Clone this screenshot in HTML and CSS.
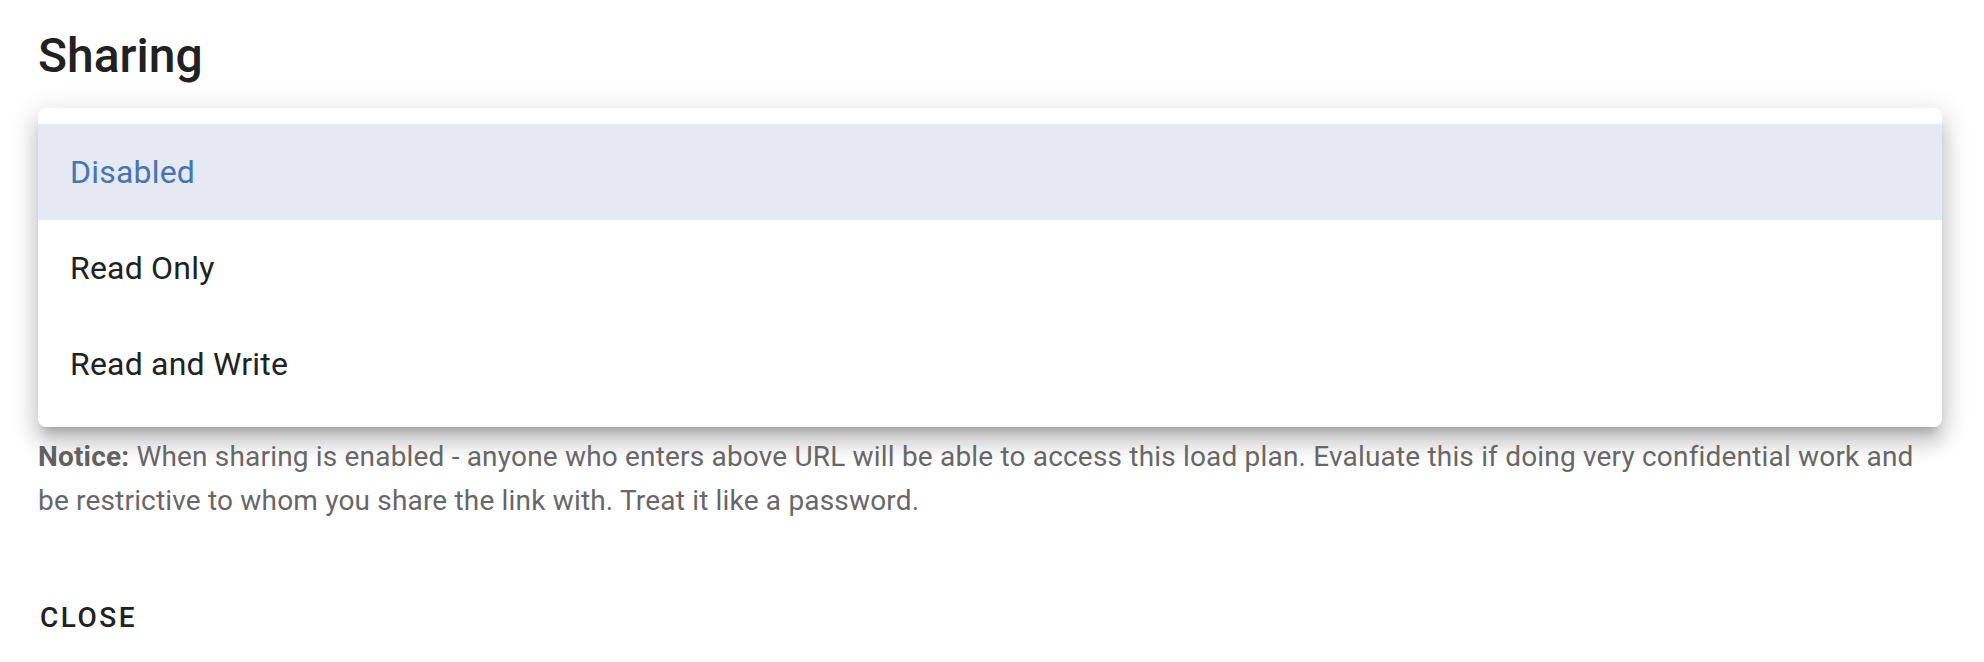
FILE: index.html
```html
<!DOCTYPE html>
<html lang="en">
<head>
<meta charset="utf-8">
<title>Sharing</title>
<link rel="stylesheet" href="styles.css">
</head>
<body>
<div class="dialog">
  <h1 class="title">Sharing</h1>
  <div class="menu" role="listbox">
    <div class="item active" role="option">Disabled</div>
    <div class="item" role="option">Read Only</div>
    <div class="item" role="option">Read and Write</div>
  </div>
  <p class="notice"><strong>Notice:</strong> When sharing is enabled - anyone who enters above URL will be able to access this load plan. Evaluate this if doing very confidential work and be restrictive to whom you share the link with. Treat it like a password.</p>
  <div class="actions">
    <button class="btn" type="button">Close</button>
  </div>
</div>
</body>
</html>
```

FILE: styles.css
```css
html, body {
  margin: 0;
  padding: 0;
  background: #ffffff;
}

body {
  font-family: Roboto, "Noto Sans", Arial, sans-serif;
  width: 1984px;
  height: 662px;
  overflow: hidden;
}

.dialog {
  padding: 24px 42px 0 38px;
  display: flex;
  flex-direction: column;
}

.title {
  margin: 0;
  font-size: 48px;
  line-height: 64px;
  font-weight: 500;
  color: #212121;
  letter-spacing: 0;
}

.menu {
  margin-top: 20px;
  background: #ffffff;
  border-radius: 8px;
  padding: 16px 0 15px;
  box-shadow: 0 10px 10px -6px rgba(0,0,0,.2),
              0 16px 20px 2px rgba(0,0,0,.14),
              0 6px 28px 4px rgba(0,0,0,.12);
}

.item {
  height: 96px;
  display: flex;
  align-items: center;
  padding: 0 32px;
  font-size: 32px;
  color: #212121;
  letter-spacing: 0.2px;
}

.item.active {
  background: #e4e9f3;
  color: #4775b0;
}

.notice {
  margin: 8px 0 0;
  padding-right: 12px;
  font-size: 28px;
  line-height: 44px;
  color: #676767;
  letter-spacing: 0.18px;
}

.notice strong {
  font-weight: 700;
  color: #616161;
}

.actions {
  margin-top: 59px;
  display: flex;
}

.btn {
  height: 72px;
  line-height: 72px;
  padding: 0 2px;
  border: 0;
  background: transparent;
  font-family: Roboto, "Noto Sans", Arial, sans-serif;
  font-size: 28px;
  font-weight: 500;
  letter-spacing: 0.089em;
  text-transform: uppercase;
  color: #212121;
}
```
